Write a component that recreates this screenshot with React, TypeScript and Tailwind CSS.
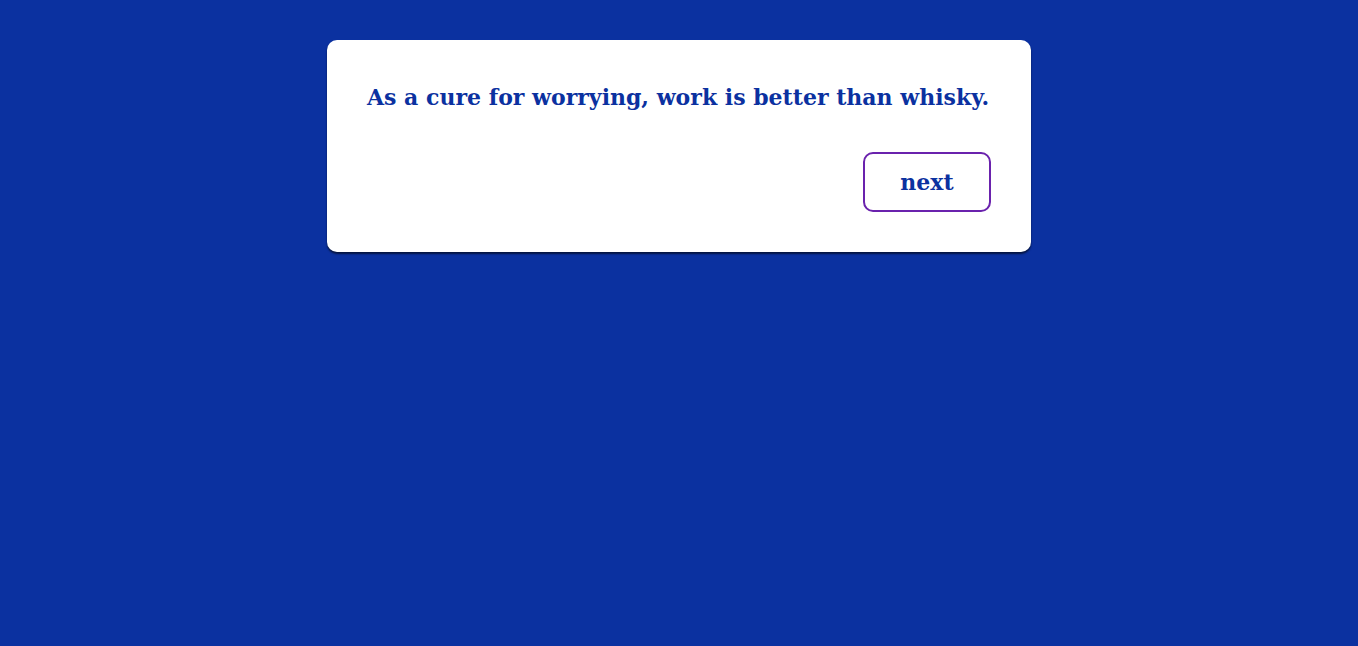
export default function App() {
  return (
    <div className="min-h-[646px] w-full bg-[#0b31a0] pt-10 flex justify-center items-start">
      <div className="w-[704px] bg-white rounded-[10px] p-10 shadow-[0_2px_2px_rgba(0,0,0,0.6)] font-['DejaVu_Serif',Georgia,serif] text-[#0b31a0]">
        <p className="text-[22px] leading-[34px] font-bold whitespace-nowrap">
          As a cure for worrying, work is better than whisky.
        </p>
        <div className="mt-[38px] flex justify-end">
          <button className="w-[128px] h-[60px] border-2 border-[#6a22ad] rounded-[10px] text-[22px] font-bold text-[#0b31a0] bg-white">
            next
          </button>
        </div>
      </div>
    </div>
  );
}
